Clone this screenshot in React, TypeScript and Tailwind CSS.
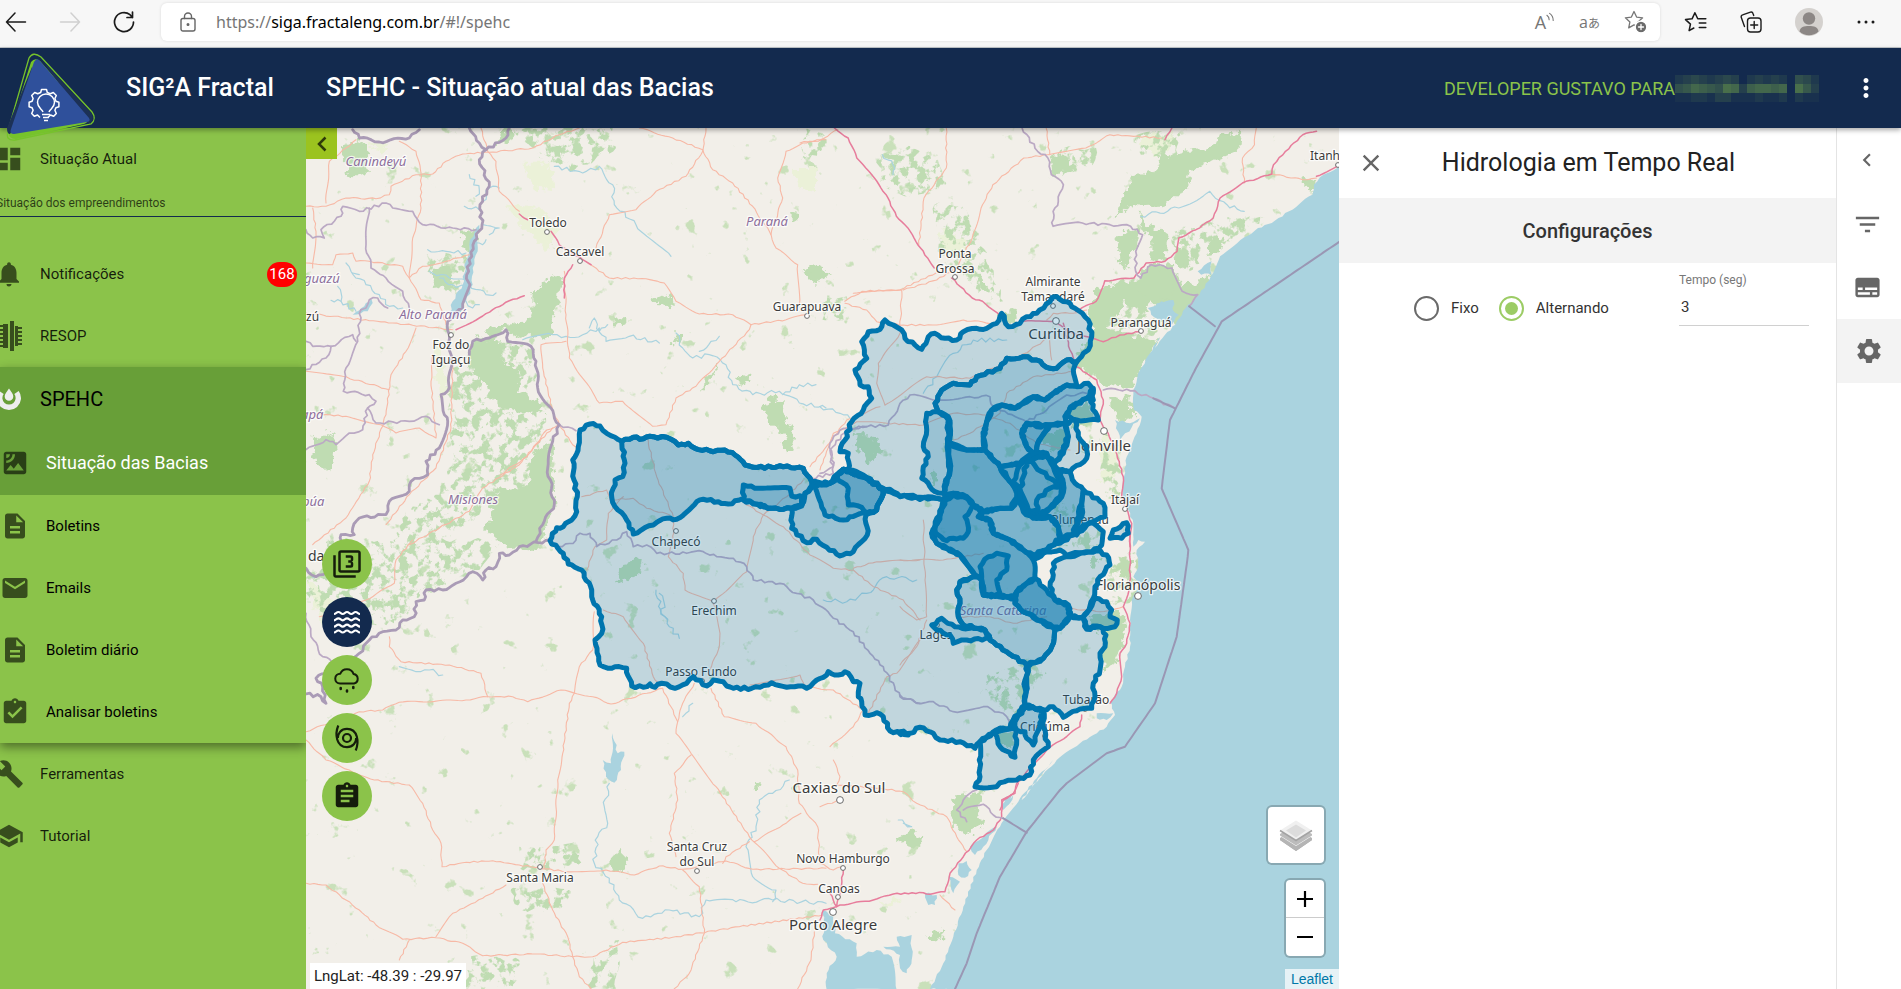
import type { ReactNode } from "react";
import {
  MdDashboard, MdNotifications, MdSatellite, MdDescription, MdEmail, MdAssignmentTurnedIn,
  MdBuild, MdSchool, MdFilter3, MdAssignment, MdFilterList, MdSubtitles, MdSettings,
  MdClose, MdMoreVert, MdChevronLeft,
} from "react-icons/md";

/* ---------- Map geometry ---------- */

type Sheet = "nw" | "sw" | "se" | "ne" | "east" | "coast" | "mid";
type Point = [number, number];
type Part = [Sheet, string];

/* Each survey sheet has an origin and a number of units per map pixel. */
const sheets: Record<Sheet, [number, number, number, number]> = {
  nw: [306, 128, 3, 3],
  sw: [306, 540, 3, 3],
  se: [820, 760, 3, 3],
  ne: [800, 128, 2.904, 3],
  east: [820, 270, 3, 3],
  coast: [900, 520, 3, 3],
  mid: [500, 400, 3, 3],
};

const project = (parts: Part[]): Point[] =>
  parts.flatMap(([sheet, text]) => {
    const [ox, oy, kx, ky] = sheets[sheet];
    return text.trim().split(/\s+/).map((pair): Point => {
      const [x, y] = pair.split(",").map(Number);
      return [ox + x / kx, oy + y / ky];
    });
  });

/* Breaks long edges up with small deterministic offsets, so lines look surveyed. */
const trace = (parts: Part[], closed: boolean, rough: number): string => {
  const pts = project(parts);
  const out: string[] = [];
  const count = closed ? pts.length : pts.length - 1;
  for (let i = 0; i < count; i++) {
    const [x0, y0] = pts[i];
    const [x1, y1] = pts[(i + 1) % pts.length];
    const len = Math.hypot(x1 - x0, y1 - y0) || 1;
    const steps = Math.max(1, Math.round(len / 4));
    for (let s = 0; s < steps; s++) {
      const t = s / steps;
      const x = x0 + (x1 - x0) * t;
      const y = y0 + (y1 - y0) * t;
      const n = s === 0 ? 0 : Math.sin(x * 12.9 + y * 7.23) * rough;
      out.push(`${(x - ((y1 - y0) / len) * n).toFixed(1)},${(y + ((x1 - x0) / len) * n).toFixed(1)}`);
    }
  }
  if (!closed) {
    const last = pts[pts.length - 1];
    out.push(`${last[0].toFixed(1)},${last[1].toFixed(1)}`);
  }
  return `M${out.join("L")}${closed ? "Z" : ""}`;
};

const sea: Part[] = [
  ["ne", "1568,115 1520,140 1492,170 1488,200 1420,250 1370,285 1330,300 1270,345 1220,385 1200,435 1160,500 1120,540 1090,590 1060,620 1030,660"],
  ["east", "1020,200 990,250 960,300 940,360 942,420 965,440 950,490 920,560 912,620 908,680 925,720 940,760"],
  ["coast", "700,80 715,60 735,65 710,90 715,140 700,170 720,190 695,240 690,300 690,380 675,440 665,500 630,545 645,585 620,620 540,670 470,720 420,775 340,870"],
  ["se", "700,0 650,55 600,115 540,200 500,270 470,330 430,440 400,530 370,610 330,687 1600,720 1600,-1900"],
];

const woods: Part[] = [
  ["nw", "110,55 150,38 185,55 185,135 120,145 125,100"],
  ["nw", "765,440 760,500 742,560 745,620 720,640 690,625 640,630 600,605 560,640 490,670 500,640 560,600 610,590 660,580 680,555 682,490 710,465"],
  ["nw", "500,640 585,640 585,700 640,730 640,790 690,820 722,862 670,860 610,850 570,830 545,770 500,740 480,690"],
  ["nw", "735,940 740,1080 745,1140 700,1250 600,1260 540,1200 560,1150 540,1100 610,1080 660,1080 670,1010 700,960"],
  ["nw", "25,930 85,915 90,960 70,1030 50,1020 25,990"],
  ["nw", "380,420 420,410 440,440 430,475 400,480 375,450"],
  ["nw", "470,310 515,305 500,365 465,365"],
  ["nw", "560,60 590,5 625,10 620,40"],
  ["nw", "1033,515 1070,500 1110,525 1100,540 1040,525"],
  ["nw", "1495,435 1530,405 1560,440 1530,468"],
  ["nw", "1455,250 1475,255 1478,280 1458,275"],
  ["nw", "1240,700 1215,760 1185,795 1185,770"],
  ["nw", "1290,760 1340,735 1340,755 1310,770"],
  ["nw", "1370,830 1400,800 1430,830 1460,900 1470,970 1440,980 1430,920 1390,880"],
  ["nw", "925,572 970,570 970,585 925,592"],
  ["nw", "1105,615 1125,612 1120,640 1105,650"],
  ["sw", "630,0 700,0 690,30 650,35"],
  ["sw", "915,960 945,930 965,970 950,1000 915,985"],
  ["sw", "1350,720 1360,750 1345,750"],
  ["sw", "930,120 960,65 1010,60 1005,90 970,120 935,130"],
  ["se", "395,110 440,110 490,90 470,150 490,200 440,225 400,190"],
  ["se", "230,240 270,215 305,235 290,255"],
  ["se", "340,510 375,520 350,550 325,535"],
  ["ne", "1285,15 1280,60 1190,110 1130,130 1130,180 1050,235 990,225 950,240 910,275 960,150 1040,120 1040,90 1110,70 1190,60 1230,20"],
  ["ne", "925,320 985,305 970,380 945,425 920,395"],
  ["ne", "990,250 1010,290 1075,320 1060,400 1020,390 1015,320 985,290"],
  ["ne", "870,480 970,455 1010,410 1080,410 1110,480 1190,440 1190,490 1130,560 1100,600 1060,560 1030,500 1000,560 940,510 920,560 890,600 1040,640 1010,700 990,720 800,720 850,600 830,550"],
  ["ne", "1190,340 1230,325 1220,370 1185,370"],
  ["ne", "1090,345 1140,380 1130,420 1090,400"],
  ["ne", "580,545 630,550 620,590 590,590"],
  ["ne", "10,435 45,405 90,445 45,465"],
  ["ne", "505,430 540,470 570,510 520,470"],
  ["ne", "725,90 770,80 780,120 740,145"],
  ["ne", "1460,155 1500,155 1495,185 1460,185"],
  ["east", "960,0 1050,0 1060,80 1000,100 950,60"],
  ["east", "820,190 870,215 960,205 1010,205 960,290 935,350 860,350 790,300 790,240"],
  ["east", "870,385 935,380 940,440 900,460 880,420"],
  ["east", "745,410 800,400 830,450 770,480 745,440"],
  ["east", "660,500 740,470 740,530 700,550"],
  ["east", "110,490 160,490 190,550 150,580 110,540"],
  ["east", "320,610 350,600 345,650"],
  ["coast", "570,115 595,115 590,150 570,140"],
  ["coast", "670,110 690,130 690,180 665,170"],
  ["coast", "560,290 640,270 680,290 670,360 640,430 610,470 610,400 620,340 580,330"],
  ["coast", "290,640 340,635 340,680 300,680"],
];

/* Broken-up woodland, drawn as scattered patches. */
const thickets: Part[] = [
  ["nw", "440,720 500,700 590,800 640,860 720,870 700,960 660,1090 560,1100 520,1160 400,1240 260,1260 300,1150 400,1100 440,1000 430,860"],
  ["nw", "580,640 690,650 690,790 640,780 590,700"],
  ["nw", "360,380 480,380 470,500 380,480"],
  ["nw", "620,0 920,0 930,60 800,130 700,90"],
  ["nw", "1500,0 1560,0 1560,60 1480,110"],
  ["sw", "60,0 600,0 520,90 430,130 340,170 300,240 180,260 60,230 0,160 0,100 60,90"],
  ["sw", "640,920 820,910 820,990 640,985"],
  ["sw", "610,1050 800,1040 760,1110 640,1110"],
  ["sw", "490,1250 640,1260 620,1346 480,1346"],
  ["sw", "860,1250 940,1200 930,1346 850,1346"],
  ["ne", "220,70 320,50 400,90 430,160 370,200 320,210 240,170"],
  ["ne", "60,505 135,505 130,575 65,575"],
  ["ne", "390,230 470,230 520,330 590,520 520,500 400,370"],
  ["ne", "760,60 860,60 850,110 740,150"],
  ["ne", "960,20 1100,10 1090,100 990,80"],
  ["ne", "1080,310 1300,260 1350,270 1200,370 1130,430 1090,400"],
  ["east", "850,40 1000,20 1060,110 1000,200 830,210 820,110"],
  ["east", "840,470 900,520 900,700 850,680"],
  ["east", "690,690 760,700 760,790 700,790"],
  ["coast", "480,40 600,20 600,80 470,85"],
  ["coast", "630,120 720,90 710,240 620,260"],
  ["coast", "270,460 400,430 440,460 380,520 370,580 340,610 310,570 240,520"],
  ["coast", "700,160 780,170 730,300 700,290"],
];

const scrub: Part[] = [
  ["nw", "650,110 730,110 745,190 680,180"],
  ["nw", "600,230 700,240 760,300 720,370 690,330 640,290"],
  ["nw", "1460,120 1530,120 1530,190 1480,180"],
  ["nw", "180,45 250,45 230,75"],
  ["nw", "380,640 400,640 430,800 400,820 390,740"],
  ["sw", "0,120 60,160 130,230 80,290 30,210"],
  ["ne", "410,310 480,330 480,400 420,370"],
  ["ne", "980,20 1090,20 1060,90 1000,60"],
  ["se", "180,430 250,415 210,440"],
  ["east", "850,480 900,540 880,620 840,640"],
];

const lakes: Part[] = [
  ["nw", "425,580 440,520 470,470 480,400 490,350 510,300 520,290 515,370 500,420 500,470 480,520 450,570"],
  ["nw", "150,552 175,535 195,510 200,525 185,550 140,560"],
  ["sw", "920,580 935,640 955,635 945,690 925,728 900,710 890,660 915,670"],
  ["sw", "0,80 20,110 50,108 20,115"],
  ["se", "10,450 40,470 45,520 110,550 110,590 170,570 215,590 230,690 20,690 20,640 50,590 10,540"],
  ["se", "190,560 240,560 230,530 275,525 275,600 260,640 240,625 240,585"],
  ["se", "450,260 510,210 530,200 490,260 465,285"],
  ["se", "415,310 440,303 455,330 435,353 415,345"],
  ["se", "315,400 350,405 345,435 325,435"],
  ["se", "385,350 420,365 400,400"],
  ["se", "545,135 580,105 570,130 550,150"],
  ["ne", "1155,430 1195,400 1195,440 1165,440"],
  ["ne", "1010,540 1050,520 1100,560 1080,590 1020,560"],
  ["east", "1010,100 1060,90 1060,150 1010,140"],
  ["east", "885,450 930,460 960,445 900,510"],
  ["coast", "590,580 640,580 620,600 590,595"],
  ["coast", "310,840 340,820 325,855"],
];

const streams: Part[] = [
  ["nw", "120,405 135,430 180,470 220,500 250,535 290,540"],
  ["nw", "95,475 105,520 150,550"],
  ["nw", "75,517 105,520"],
  ["nw", "140,435 160,440"],
  ["nw", "365,365 420,370 480,375"],
  ["nw", "475,235 520,245 550,180 580,180"],
  ["nw", "490,140 520,185 510,205"],
  ["nw", "530,290 580,300 550,320"],
  ["nw", "500,350 530,350 540,335"],
  ["nw", "490,470 540,500 570,495"],
  ["nw", "480,520 500,540 520,530"],
  ["nw", "370,430 430,450 480,455"],
  ["nw", "400,450 440,470 480,480"],
  ["nw", "650,635 740,620 780,625 830,620 880,600 900,640 970,625 1060,645"],
  ["nw", "850,600 865,570 880,610 905,590"],
  ["nw", "1110,615 1130,660 1160,690 1210,680 1260,710 1280,770 1340,800 1420,790 1480,825 1560,840"],
  ["nw", "1180,670 1215,640 1240,625"],
  ["nw", "1430,800 1480,770 1530,770"],
  ["nw", "745,115 830,135 880,115 920,170 925,230 990,290 1095,385"],
  ["sw", "280,380 330,395 370,390 410,405"],
  ["sw", "1050,150 1065,210 1090,260 1120,295"],
  ["sw", "1060,160 1075,190 1065,220 1085,240"],
  ["sw", "910,730 895,800 905,850 875,890 865,970 910,1015 940,1080 1010,1135 1090,1110 1180,1130 1200,1080 1290,1085 1400,1080 1560,1090"],
  ["sw", "1450,720 1400,760 1360,780 1350,860 1320,920 1340,1010 1410,1050 1400,1085"],
  ["sw", "1160,490 1130,530"],
  ["ne", "990,265 1100,240 1190,190 1240,230 1290,250"],
  ["ne", "240,80 270,110 270,140"],
  ["east", "0,410 60,430 100,450"],
  ["east", "310,370 350,320 400,250 460,210 560,210"],
  ["se", "235,180 275,200 250,190"],
  ["mid", "970,600 1040,605 1100,580 1160,530 1250,540"],
];

const roads: Part[] = [
  ["nw", "0,235 60,235 120,210 210,212 250,200 255,175 330,140 380,138 420,100 470,78 560,72 680,60 760,20 820,0"],
  ["nw", "60,225 70,100 120,60 150,35"],
  ["nw", "280,40 330,70 345,135 345,240 320,330 310,450 345,515 400,525 420,590"],
  ["nw", "0,405 80,410 90,380 140,375 150,400 190,400 290,415 310,450 350,415 420,400 490,380"],
  ["nw", "0,555 120,570 260,585 440,605"],
  ["nw", "525,0 545,70 570,100 580,190 640,250"],
  ["nw", "840,400 910,450 1020,452 1075,465 1110,520 1180,558 1280,560 1335,590 1440,575 1500,560"],
  ["nw", "870,360 910,260 990,245 1050,190 1140,145 1190,70 1200,0"],
  ["nw", "1000,0 1100,30 1190,65 1220,125 1280,165 1340,235 1390,310 1410,360 1475,410 1480,530"],
  ["nw", "1560,35 1490,45 1440,70 1415,150 1430,210 1395,320"],
  ["nw", "775,430 780,560 790,690 880,825 950,820 1040,895 1080,890 1110,810 1170,775 1240,700 1330,605 1335,590"],
  ["nw", "780,640 705,650 710,720 740,850 760,890 800,950 815,960"],
  ["nw", "330,600 300,670 255,740 240,860 200,980 190,1060 120,1170 20,1250"],
  ["nw", "380,680 375,760 390,930 340,900 270,915 225,890 120,865 0,855"],
  ["nw", "440,700 435,900 390,1020 310,1100 240,1190"],
  ["nw", "740,900 690,950 640,1010 530,1080 490,1150 400,1200 310,1250"],
  ["nw", "20,240 30,310 20,420"],
  ["nw", "0,730 110,745 250,785"],
  ["sw", "320,0 270,60 265,130 180,180 40,230"],
  ["sw", "250,290 250,320 285,365 430,375 525,400 545,470"],
  ["sw", "0,575 160,515 230,510 280,487 480,480 545,470 620,470 665,485 765,450 860,470 915,492 1070,445"],
  ["sw", "865,215 860,330 820,380 805,460 790,490 770,640 755,720 745,900 720,930 715,985"],
  ["sw", "0,600 60,660 130,690 205,720 310,735 350,790 380,870 405,910 408,980 470,968 560,962 640,975 780,995 900,990 985,1005 1060,978 1130,988 1200,975 1260,963 1340,988 1560,985"],
  ["sw", "600,1035 530,1075 440,1120 390,1190"],
  ["sw", "0,1030 60,1035 160,1110 210,1155 290,1198 390,1193 470,1210 530,1247 690,1242 800,1250 860,1250 950,1207 1100,1192 1300,1160 1550,1125"],
  ["sw", "310,1200 280,1260"],
  ["sw", "710,1030 740,1110 785,1190 800,1250 820,1310 855,1346"],
  ["sw", "1070,445 1115,545 1110,580 1155,640 1230,740 1330,890 1420,985 1490,1030 1535,1033"],
  ["sw", "1165,430 1130,490 1115,545"],
  ["sw", "1155,645 1105,700 1115,780 1090,880 1110,950"],
  ["sw", "1215,445 1255,530 1350,550 1440,620 1475,690 1480,790 1535,860 1540,950"],
  ["sw", "1330,905 1260,950 1250,970"],
  ["sw", "1345,905 1430,855 1485,820"],
  ["sw", "1130,990 1180,1040 1195,1180 1150,1300 1105,1346"],
  ["sw", "1525,1175 1515,1260 1475,1346"],
  ["mid", "0,225 80,170 140,90 175,75"],
  ["mid", "440,110 470,230 520,350 520,420 505,470 550,520 555,570 640,605"],
  ["mid", "245,290 320,270 330,300 400,295 440,325 510,345"],
  ["mid", "370,290 325,340 320,420 285,440 260,510"],
  ["mid", "310,630 370,650 430,730 460,830 480,860"],
  ["mid", "640,610 660,700 655,750 630,810"],
  ["mid", "640,605 740,515 760,410 790,345 860,290 910,240"],
  ["mid", "720,300 790,345 850,380 930,465 1000,505 1060,510 1120,560 1210,600 1260,660"],
  ["mid", "1060,505 1130,485 1260,480"],
  ["mid", "1260,720 1190,820 1160,830 1105,940"],
  ["mid", "930,200 975,145 1040,60 1140,20"],
  ["mid", "750,855 830,840 900,825 915,860 1000,870 1090,930 1060,980 990,1040"],
  ["east", "0,600 40,490 110,455 200,460 310,465 400,430 500,435 570,460 650,520 750,540"],
  ["east", "195,405 170,340 175,280 240,190 245,60 100,70"],
  ["east", "75,100 140,120 170,155 250,165 350,165 430,150 520,160"],
  ["east", "250,60 350,30 400,0"],
  ["east", "195,405 320,320 450,325 540,285 600,260 690,200 695,270"],
  ["east", "400,510 450,490 540,430 560,370 640,320 760,305"],
  ["east", "680,150 700,130 760,130 800,120"],
  ["ne", "425,0 425,120 360,210 345,350"],
  ["ne", "460,410 500,330 530,230 560,170 650,90 720,80 830,60 900,20 1050,30"],
  ["ne", "715,0 725,80"],
  ["ne", "1325,0 1320,50 1285,90 1290,165"],
  ["ne", "1370,138 1460,155 1500,150"],
  ["ne", "130,520 180,490 290,485 395,435"],
  ["ne", "0,45 60,35 110,5"],
  ["coast", "70,0 75,180 80,290 50,300 0,260"],
  ["coast", "0,120 130,120 250,100"],
  ["coast", "180,290 270,290 340,310 440,290"],
  ["coast", "80,300 50,380 0,435"],
  ["coast", "510,265 600,275 670,260"],
  ["se", "60,120 0,140"],
  ["se", "40,0 60,50 50,75 180,85 250,95 290,130 380,170 410,230 440,275"],
  ["se", "0,310 40,330 65,320"],
  ["se", "360,405 405,450"],
];

const highways: Part[] = [
  ["nw", "450,605 520,570 560,545 610,518 655,503"],
  ["nw", "735,310 760,350 830,395 855,410"],
  ["nw", "800,410 775,450 775,510"],
  ["nw", "640,258 665,275"],
  ["ne", "100,0 140,30 165,90 200,130 250,200 280,265 320,310 350,360 390,420"],
  ["ne", "440,450 500,510 530,520 580,560 600,595"],
  ["ne", "800,550 860,520 885,458 970,450 1005,405 1060,400 1095,370 1100,330 1150,305 1200,270 1220,210 1285,165 1370,138 1375,110 1410,70 1460,20 1500,10"],
  ["ne", "1568,110 1500,145"],
  ["ne", "1060,35 1080,0"],
  ["ne", "650,580 740,580"],
  ["east", "700,155 760,190 850,215 900,195 960,185"],
  ["east", "730,160 750,240 770,290 800,310 830,330 850,390 840,450 880,520 910,620 905,680 935,760 930,830"],
  ["coast", "690,40 690,200 670,260 690,310 680,370 660,400 665,470 650,520 630,550"],
  ["coast", "545,585 540,620 440,690 350,790 345,820 310,840 300,870"],
  ["se", "595,70 580,100 545,120 545,170 520,210 470,240 430,290 390,340 375,395 330,403 310,398 220,402 160,420 60,435 10,450 0,480"],
  ["se", "70,330 60,400 50,440 30,400"],
];

const frontiers: Part[] = [
  ["nw", "140,5 160,30 220,42 310,30 340,5"],
  ["nw", "490,0 520,45 540,65 600,30 610,0"],
  ["nw", "540,65 520,95 550,175 522,230 528,290 505,340 482,440 492,470 470,540 425,580 430,620"],
  ["nw", "430,620 435,700 430,780 405,800 415,860 425,880 400,960 360,1000 365,1040 315,1060 310,1090 250,1120 240,1160 160,1170 140,1200 145,1220 105,1220 100,1250"],
  ["nw", "490,680 500,640 550,630 600,605 605,640 675,655 690,700 695,780 725,830 760,890 740,940 725,1020 745,1130 710,1190 690,1240"],
  ["sw", "730,0 640,20 610,45 580,40 570,80 540,90 530,120 500,95 450,130 410,150 360,150 355,180 330,185 325,230 290,240 270,270 230,275 190,300 160,340 100,370 60,400 30,415 50,440 60,490 45,470 0,462"],
  ["sw", "0,85 30,110 60,100"],
];

const stateLines: Part[] = [
  ["nw", "0,305 20,330 55,330 45,305 105,265 110,235 160,250 240,225 260,240 320,250 350,290 440,300 510,305"],
  ["nw", "190,240 180,350 195,420 240,450 290,490 310,540"],
  ["nw", "165,545 180,540 190,515 215,510 245,540"],
  ["nw", "165,545 155,640 120,720 112,790 190,800 210,820 185,840 210,885 310,880 360,865 400,890"],
  ["nw", "0,640 20,655 75,655 140,620 150,640"],
  ["nw", "0,725 60,690 75,655"],
  ["nw", "0,965 60,935 90,950 130,915 170,905 185,840"],
  ["nw", "760,890 810,908"],
  ["sw", "0,220 15,290 50,350 90,370"],
  ["mid", "150,422 175,440 220,430 240,400 270,400 290,440 350,420 380,395 400,440 440,435 470,460 560,460 610,455 650,470 700,475 740,500 760,540 840,550 890,580 940,600 1000,655 1060,695 1110,760 1150,800 1200,890 1260,910"],
  ["coast", "0,525 50,550 100,545 160,575 250,560 310,580 330,615"],
  ["east", "0,610 40,590 30,520 60,480 140,470 205,465 240,400 270,375 340,390 450,380 510,380 520,410 620,455 680,420 740,375 800,370"],
  ["mid", "935,235 1000,220 990,150 1040,90 1100,80"],
  ["ne", "645,0 690,70 720,90 730,140 765,170 750,220 735,250 735,295 820,285 900,290 960,295 995,320 975,370 975,430 990,450 1020,410 1080,420 1110,490 1155,500 1130,535"],
  ["se", "470,90 430,120 410,150 440,185"],
  ["se", "430,150 490,133 520,165 550,175"],
  ["east", "850,360 920,358 1000,385 1065,415"],
];

const maritime: Part[][] = [
  [
    ["ne", "1568,340 1225,580 1150,720"],
    ["east", "1050,450 1025,655 1105,840"],
    ["coast", "862,120 830,350 765,550 675,680 620,700 500,790"],
    ["se", "720,90 620,215 540,350 470,520 440,610 405,687"],
  ],
  [["ne", "1205,595 1130,535"]],
  [["east", "1065,415 1000,385"]],
  [["se", "620,218 550,175"]],
];

type Basin = { level: number; parts: Part[] };

const basins: Basin[] = [
  { level: 1, parts: [
    ["mid", "240,90 270,72 300,78 320,100 345,112 365,124 400,112 430,116 460,110 500,112 535,135 565,130 585,145 640,155 675,150 705,165 735,195 760,202 850,200 910,205 935,245 990,250 1020,215 1030,208 1100,235 1150,268 1170,268 1200,290 1240,286"],
    ["east", "300,682 350,685 372,690 360,735 345,770 335,790"],
    ["coast", "110,70 180,105 225,165 180,185 170,210 180,250 175,290 190,315 255,330 270,360 320,395 380,435 380,480 375,555 340,600 330,625 300,625 240,665 225,685 180,665 120,660 100,640 60,622 30,640 0,635"],
    ["mid", "1225,1005 1170,993 1150,950 1130,938 1095,945 1085,905 1075,890 1080,850 1060,845 1045,820 1035,815 1015,825 985,815 970,832 950,840 920,865 895,858 860,862 815,848 780,862 755,865 700,865 680,858 670,845 640,840 620,858 580,830 560,850 525,865 500,852 485,850 465,862 450,852 430,862 395,858 380,805 345,800 325,805 300,795 285,720 305,700 305,650 275,590 275,570 245,510 205,492 190,460 150,422 170,383 190,380 215,360 230,335 232,290 222,240 218,180 235,140"],
  ] },
  { level: 1, parts: [["mid", "365,124 400,112 430,116 460,110 500,112 535,135 565,130 585,145 640,155 675,150 705,165 735,195 760,202 850,200 910,205 935,245 935,262 915,280 905,315 875,325 815,325 760,310 725,297 685,312 655,305 610,298 590,305 530,358 500,355 460,375 400,402 380,360 345,320 335,292 345,240 368,230 375,190"]] },
  { level: 1, parts: [["mid", "730,255 765,265 870,265 875,288 910,290 900,320 875,325 815,325 760,312 730,300"]] },
  { level: 1, parts: [["mid", "875,325 875,385 920,428 950,418 980,442 1020,468 1060,455 1102,405 1098,345 1130,330 1150,270 1100,235 1030,208 1000,245 940,255 915,280 905,318"]] },
  { level: 1, parts: [["mid", "945,262 975,345 1030,360 1070,345 1100,340 1130,330 1150,270 1100,235 1030,208 1000,245"]] },
  { level: 1, parts: [["mid", "1010,235 1045,265 1045,315 1085,322 1105,340 1130,330 1150,270 1100,235 1030,208"]] },
  { level: 1, parts: [["east", "195,150 180,178 145,185 125,215 140,265 105,300 120,345 145,350 155,385 130,420 95,455 75,510 60,545 85,550 85,600 130,615 190,655 220,670 275,685 350,685 375,690 380,640 390,600 383,520 385,450 355,425 345,400 365,360 400,340 450,345 470,320 540,295 560,265 610,260 650,270 690,295 710,295 740,270 770,275 790,250 805,240 815,200 805,150 765,115 740,95 700,80 690,95 650,130 620,140 600,160 565,170 545,130 530,160 500,175 470,175 430,185 410,210 375,205 345,190 325,200 305,238 285,225 255,205 245,180 220,165"]] },
  { level: 2, parts: [["east", "345,400 365,360 400,340 450,345 470,320 540,295 560,265 610,260 650,270 690,295 710,295 740,270 770,275 760,300 770,345 740,345 700,370 675,390 640,380 585,415 545,405 515,420 500,455 490,500 495,540 440,540 385,520 390,470 380,440 355,425"]] },
  { level: 1, parts: [["east", "320,430 350,425 385,440 390,480 383,520 390,600 375,640 370,670 345,665 325,640 305,625 310,590 325,560 310,530 320,480"]] },
  { level: 3, parts: [["east", "545,405 585,415 640,380 675,390 700,370 740,345 770,350 805,340 820,360 820,390 800,385 760,405 740,430 735,460 690,465 650,470 620,460 605,490 620,530 640,550 600,580 540,590 510,560 495,540 490,500 500,455 515,420"]] },
  { level: 2, parts: [["east", "820,355 812,395 835,450 770,450 735,440 750,415 800,385"]] },
  { level: 4, parts: [["east", "620,460 690,465 665,500 650,535 640,555 620,530 605,490"]] },
  { level: 3, parts: [["east", "690,465 735,460 745,500 730,530 720,560 700,590 680,550 650,545 650,530 665,500"]] },
  { level: 1, parts: [["east", "765,450 775,500 800,540 800,565 750,605 715,600 700,580 730,550 745,500 735,460"]] },
  { level: 4, parts: [["east", "385,520 440,540 495,540 540,590 590,670 575,715 540,715 490,725 460,705 440,680 400,670 375,680 380,640 390,600"]] },
  { level: 4, parts: [["east", "540,590 600,580 640,555 680,550 715,600 730,640 725,680 690,715 640,740 610,720 595,660 575,640"]] },
  { level: 0, parts: [["east", "600,585 625,570 665,605 722,650 690,655 650,690 655,725 625,720 600,660 580,635"]] },
  { level: 0, parts: [["east", "600,665 605,705 650,745 720,680 728,645 700,590 680,555 620,575"]] },
  { level: 3, parts: [["east", "715,600 750,605 765,640 790,660 785,700 770,750 765,790 720,805 715,770 690,740 650,740 690,715 725,680 730,640"]] },
  { level: 2, parts: [["east", "790,660 850,700 855,740 820,755 800,765 770,795 760,780 785,740 785,700"]] },
  { level: 4, parts: [
    ["east", "375,690 400,670 440,680 460,705 490,725 475,740 510,750 520,790 570,810 610,840"],
    ["coast", "400,120 405,175 380,190 350,215 345,235 250,225 245,180 225,165 180,105 110,70 95,40"],
  ] },
  { level: 1, parts: [["east", "460,705 435,740 445,785 430,805 400,805 380,812 355,795 345,780 375,690 400,675 440,685"]] },
  { level: 3, parts: [
    ["east", "490,725 540,715 575,715 590,690 610,725 640,745 690,740 715,770 720,805"],
    ["coast", "440,90 400,105 370,90 330,60 280,40 270,0"],
    ["east", "475,740"],
  ] },
  { level: 1, parts: [["coast", "245,170 240,140 265,110 290,100 325,108 320,150 290,180 300,220 250,225"]] },
  { level: 5, parts: [["coast", "405,175 440,210 465,240 505,255 510,290 480,325 440,310 380,280 345,250 350,215 380,190"]] },
  { level: 2, parts: [["coast", "225,170 180,185 170,210 180,250 175,290 190,315 255,330 270,360 320,395 380,435 430,415 455,380 465,330 380,280 345,250 345,230 250,225 245,180"]] },
  { level: 1, parts: [["coast", "95,315 125,295 165,320 255,330 270,355 200,360 160,370 150,345 110,330"]] },
  { level: 1, parts: [["coast", "480,70 520,45 550,15 580,10 610,35 605,75 575,95 540,98 500,106 480,90 430,100 402,118 415,95"]] },
  { level: 1, parts: [["coast", "460,130 500,110 590,92 620,105 630,135 600,170 585,200 580,235 560,280 545,292 510,290 505,255 465,240 450,200 460,165"]] },
  { level: 1, parts: [["coast", "630,55 640,30 680,8 685,40 665,55"]] },
  { level: 2, parts: [["coast", "585,235 620,245 635,270 630,290 652,300 645,320 610,325 590,318 560,328 550,295"]] },
  { level: 1, parts: [["coast", "510,290 550,292 560,325 600,320 618,345 615,380 600,400 600,450 580,490 585,530 575,565 530,572 490,592 460,560 430,570 375,555 375,480 385,440 430,415 455,380 465,330 480,325"]] },
  { level: 1, parts: [["coast", "240,665 300,625 340,625 340,600 375,558 430,570 430,620 445,680 400,720 390,765 350,780 300,788 290,800 225,800 240,770 238,720"]] },
  { level: 1, parts: [["coast", "285,640 345,625 350,660 345,712 300,680"]] },
  { level: 1, parts: [["coast", "345,605 375,560 425,570 425,600 410,640 400,675 380,655 375,635 350,630"]] },
];

type Label = { text: string; x: number; y: number; size: number; region?: boolean; dot?: Point; start?: boolean };

const labels: Label[] = [
  { text: "Canindeyú", x: 376, y: 166, size: 13, region: true },
  { text: "Paraná", x: 767, y: 226, size: 13, region: true },
  { text: "Alto Paraná", x: 433, y: 319, size: 13, region: true },
  { text: "guazú", x: 304, y: 283, size: 13, region: true, start: true },
  { text: "apá", x: 301, y: 419, size: 13, region: true, start: true },
  { text: "púa", x: 302, y: 506, size: 13, region: true, start: true },
  { text: "Misiones", x: 473, y: 504, size: 13, region: true },
  { text: "Santa Catarina", x: 1003, y: 615, size: 13, region: true },
  { text: "zú", x: 306, y: 321, size: 12, start: true },
  { text: "da", x: 308, y: 561, size: 14, start: true },
  { text: "Toledo", x: 548, y: 227, size: 12, dot: [547, 232] },
  { text: "Cascavel", x: 580, y: 256, size: 12, dot: [580, 261] },
  { text: "Foz do", x: 451, y: 349, size: 12, dot: [451, 335] },
  { text: "Iguaçu", x: 451, y: 364, size: 12 },
  { text: "Guarapuava", x: 807, y: 311, size: 12, dot: [807, 316] },
  { text: "Ponta", x: 955, y: 258, size: 12 },
  { text: "Grossa", x: 955, y: 273, size: 12, dot: [955, 277] },
  { text: "Almirante", x: 1053, y: 286, size: 12 },
  { text: "Tamandaré", x: 1053, y: 301, size: 12, dot: [1053, 306] },
  { text: "Curitiba", x: 1056, y: 339, size: 15, dot: [1056, 321] },
  { text: "Paranaguá", x: 1141, y: 327, size: 12, dot: [1141, 331] },
  { text: "Itanhaém", x: 1310, y: 160, size: 12, dot: [1338, 165], start: true },
  { text: "Joinville", x: 1104, y: 451, size: 15, dot: [1104, 431] },
  { text: "Itajaí", x: 1125, y: 504, size: 12, dot: [1125, 509] },
  { text: "Blumenau", x: 1080, y: 524, size: 12 },
  { text: "Florianópolis", x: 1138, y: 590, size: 14, dot: [1138, 596] },
  { text: "Lages", x: 936, y: 639, size: 12, dot: [937, 625] },
  { text: "Tubarão", x: 1086, y: 704, size: 12, dot: [1085, 709] },
  { text: "Criciúma", x: 1045, y: 731, size: 12, dot: [1045, 736] },
  { text: "Chapecó", x: 676, y: 546, size: 12, dot: [676, 531] },
  { text: "Erechim", x: 714, y: 615, size: 12, dot: [714, 601] },
  { text: "Passo Fundo", x: 701, y: 676, size: 12, dot: [702, 681] },
  { text: "Caxias do Sul", x: 839, y: 793, size: 15, dot: [840, 800] },
  { text: "Santa Cruz", x: 697, y: 851, size: 12 },
  { text: "do Sul", x: 697, y: 866, size: 12, dot: [697, 871] },
  { text: "Novo Hamburgo", x: 843, y: 863, size: 12, dot: [843, 868] },
  { text: "Santa Maria", x: 540, y: 882, size: 12, dot: [540, 867] },
  { text: "Canoas", x: 839, y: 893, size: 12, dot: [838, 897] },
  { text: "Porto Alegre", x: 833, y: 930, size: 15, dot: [833, 912] },
];

const fillFor = (level: number) => 1 - Math.pow(0.8, level);

function BasinMap() {
  return (
    <svg
      className="absolute inset-0 size-full"
      viewBox="306 128 1033 861"
      preserveAspectRatio="xMinYMin slice"
      role="img"
      aria-label="Mapa das bacias"
    >
      <defs>
        <filter id="ragged" x="-5%" y="-5%" width="110%" height="110%" colorInterpolationFilters="sRGB">
          <feTurbulence type="fractalNoise" baseFrequency="0.12" numOctaves="3" seed="4" />
          <feDisplacementMap in="SourceGraphic" scale="14" xChannelSelector="R" yChannelSelector="G" />
        </filter>
        <filter id="scatter" colorInterpolationFilters="sRGB">
          <feTurbulence type="fractalNoise" baseFrequency="0.11" numOctaves="4" seed="9" />
          <feColorMatrix values="0 0 0 0 0  0 0 0 0 0  0 0 0 0 0  9 0 0 0 -4.4" />
          <feComposite in="SourceGraphic" operator="in" />
        </filter>
        <filter id="sprinkle" colorInterpolationFilters="sRGB">
          <feTurbulence type="fractalNoise" baseFrequency="0.05" numOctaves="4" seed="21" />
          <feColorMatrix values="0 0 0 0 0  0 0 0 0 0  0 0 0 0 0  14 0 0 0 -10" />
          <feComposite in="SourceGraphic" operator="in" />
        </filter>
      </defs>
      <rect x="300" y="120" width="1600" height="1000" fill="#f2efe9" />
      <rect x="306" y="128" width="1033" height="861" fill="#c9e0ba" filter="url(#sprinkle)" />
      <g filter="url(#ragged)">
        {scrub.map((p, i) => <path key={i} d={trace([p], true, 0)} fill="#ebf1d8" />)}
      </g>
      <g filter="url(#scatter)">
        {thickets.map((p, i) => <path key={i} d={trace([p], true, 2)} fill="#bfdcb2" />)}
      </g>
      <g filter="url(#ragged)">
        {woods.map((p, i) => <path key={i} d={trace([p], true, 1)} fill="#bfdcb2" />)}
      </g>
      <g fill="#aad3df">
        <path d={trace(sea, true, 0.8)} />
        {lakes.map((p, i) => <path key={i} d={trace([p], true, 1.2)} />)}
      </g>
      <g fill="none" strokeLinejoin="round" strokeLinecap="round">
        {streams.map((p, i) => <path key={i} d={trace([p], false, 2)} stroke="#aad3df" strokeWidth="1.2" />)}
        {roads.map((p, i) => <path key={i} d={trace([p], false, 0.7)} stroke="#f7b9a6" strokeWidth="1.1" />)}
        {highways.map((p, i) => <path key={i} d={trace([p], false, 0.6)} stroke="#e77d9c" strokeWidth="1.5" />)}
        {stateLines.map((p, i) => <path key={i} d={trace([p], false, 1.4)} stroke="#bba9c4" strokeWidth="1.7" />)}
        {frontiers.map((p, i) => <path key={i} d={trace([p], false, 1.5)} stroke="#aa9bb6" strokeWidth="2.8" />)}
        {maritime.map((p, i) => <path key={i} d={trace(p, false, 0)} stroke="#9a97b4" strokeWidth="2" />)}
      </g>
      <g fontFamily="'Noto Sans', sans-serif" strokeLinejoin="round">
        {labels.map((l) => (
          <g key={l.text}>
            {l.dot && <circle cx={l.dot[0]} cy={l.dot[1]} r={l.size > 12 ? 3.4 : 2.4} fill="#fff" stroke="#6b6b6b" />}
            <text
              x={l.x}
              y={l.y}
              fontSize={l.size}
              fontStyle={l.region ? "italic" : "normal"}
              textAnchor={l.start ? "start" : "middle"}
              fill={l.region ? "#8d6f9c" : "#3b3b3b"}
              stroke="#ffffff"
              strokeOpacity="0.75"
              strokeWidth="2.5"
              paintOrder="stroke"
            >
              {l.text}
            </text>
          </g>
        ))}
      </g>
      <g stroke="#0075ae" strokeWidth="5" strokeLinejoin="round">
        {basins.map((b, i) => (
          <path key={i} d={trace(b.parts, true, 1.2)} fill="#0075ae" fillOpacity={fillFor(b.level)} />
        ))}
      </g>
    </svg>
  );
}

/* ---------- Icons ---------- */

const stroke = { fill: "none", stroke: "currentColor", strokeLinecap: "round", strokeLinejoin: "round" } as const;

const GateIcon = () => (
  <svg viewBox="0 0 30 30" className="size-[30px]" fill="currentColor">
    <path d="M0 4h9v2H0zM0 8h9v2H0zM0 12h9v2H0zM0 16h9v2H0zM0 20h9v2H0zM0 24h9v2H0zM9 3h5v24H9zM16 0h4v30h-4zM21 5h3v20h-3zM24 6h4v2h-4zM24 10h4v2h-4zM24 14h4v2h-4zM24 18h4v2h-4zM24 22h4v2h-4z" />
  </svg>
);

const BasinIcon = () => (
  <svg viewBox="0 0 30 30" className="size-[30px]">
    <path d="M7.5 8.5a9.3 9.3 0 1 0 15 0" fill="none" stroke="#eeeeee" strokeWidth="5.4" />
    <path d="M15 4.5c2.5 3.5 4.3 5.5 4.3 8a4.3 4.3 0 0 1-8.6 0c0-2.5 1.8-4.5 4.3-8z" fill="#eeeeee" />
  </svg>
);

const WavesIcon = () => (
  <svg viewBox="0 0 26 24" className="h-6 w-[26px]" {...stroke} strokeWidth="2.2" strokeLinecap="butt">
    {[3, 9.3, 15.6, 21.5].map((y) => (
      <path key={y} d={`M0 ${y + 1}c2.2 0 2.2-2 4.4-2s2.2 2 4.3 2 2.200-2 4.3-2 2.2 2 4.3 2 2.2-2 4.3-2 2.2 2 4.4 2`} />
    ))}
  </svg>
);

const RainIcon = () => (
  <svg viewBox="0 0 26 26" className="size-[26px]" {...stroke} strokeWidth="2">
    <path d="M6 16.5a4.9 4.900 0 0 1 .3-9.8 7 7 0 0 1 13.2.2A4.9 4.9 0 0 1 20 16.500z" />
    <path d="M6.700 21v1M13 23.500v1M19.300 20v1" strokeWidth="2.6" />
  </svg>
);

const CycloneIcon = () => (
  <svg viewBox="0 0 26 26" className="size-[26px]" {...stroke} strokeWidth="2.2" strokeLinecap="butt">
    <circle cx="13" cy="13" r="4" />
    <path d="M4.300 .5C.8 9 2 22.200 13 22.200c6 0 9.200-4.500 9.200-9.200M21.700 25.500c3.500-8.500 2.300-21.700-8.700-21.700-6 0-9.200 4.500-9.200 9.200" />
  </svg>
);

const starPath = "M10 1.500l2.600 5.600 6 .7-4.500 4.100 1.200 6-5.300-3-5.300 3 1.200-6L1.400 7.800l6-.7z";

function Logo() {
  return (
    <svg viewBox="0 0 104 98" className="pointer-events-none absolute left-0 top-0 z-20 h-[98px] w-[104px]" aria-hidden="true">
      <path d="M29 10Q33 3 41 9L92 64Q97 71 91 76L15 92Q5 93 8 83Z" fill="none" stroke="#76c32b" strokeWidth="1.3" />
      <path d="M31 14Q35 9 40 13L88 68Q90 74 84 76L16 91Q8 91 9 84Z" fill="#76c32b" />
      <path d="M32 19L7 80Q7 86 10 86L38 45Z" fill="#1c3157" />
      <path d="M42 12L92 66Q95 73 88 76L84 71Z" fill="#1c3157" />
      <path d="M34 14Q37 9 40 13L89 70Q91 73 87 74L14 86Q9 86 11 81Z" fill="#2f509b" />
      <g fill="none" stroke="#fff" strokeWidth="1.5" strokeLinejoin="round">
        <path d="M40 69.500l-2.500-2.500-3.200 1.300-2.600-2.800 1.400-3.200-1-2.600-3-1v-4.400l3-1 1-2.800-1.400-3 3-3 3 1.300 3-1.300.8-3h5l.8 3 3 1.300 3-1.300 3 3-1.400 3 1 2.800 3 1v4.400l-3 1-1 2.600 1.400 3.200-2.600 2.800-3.200-1.300-2.500 2.500" />
        <path d="M43 64c-1-3-5.500-4.500-5.500-9.500a8.500 8.500 0 0 1 17 0c0 5-4.500 6.500-5.500 9.500M42 66.500h8M43 69.500h6M44 72.500h4" />
      </g>
    </svg>
  );
}

/* ---------- Browser bar ---------- */

function BrowserBar() {
  return (
    <div className="flex h-12 shrink-0 items-center border-b border-[#c3c8cc] bg-[#f7f7f7] pb-1 text-[#1b1b1b]">
      <div className="flex w-[161px] shrink-0 items-center gap-8 pl-[5px]">
        <button aria-label="Voltar">
          <svg viewBox="0 0 22 20" className="h-5 w-[22px]" {...stroke} strokeWidth="1.5"><path d="M20.500 10H1.500M10 1L1.500 10l8.500 9" /></svg>
        </button>
        <button aria-label="Avançar" className="text-[#d0d0d0]">
          <svg viewBox="0 0 22 20" className="h-5 w-[22px]" {...stroke} strokeWidth="1.5"><path d="M1.500 10h19M12 1l8.500 9-8.500 9" /></svg>
        </button>
        <button aria-label="Atualizar">
          <svg viewBox="0 0 22 22" className="size-[22px]" {...stroke} strokeWidth="1.7"><path d="M20.500 11a9.500 9.500 0 1 1-3.500-7.300l2.500 2.800M19.500 1v5.500H14" /></svg>
        </button>
      </div>
      <div className="flex h-[38px] flex-1 items-center rounded-md bg-white pl-[19px] shadow-[0_0_3px_rgba(0,0,0,0.12)]">
        <svg viewBox="0 0 16 20" className="h-5 w-4 text-[#666]" {...stroke} strokeWidth="1.4">
          <rect x="1" y="6.500" width="14" height="12.500" rx="2" />
          <path d="M4.500 6.500V4.500a3.500 3.500 0 0 1 7 0v2" />
          <circle cx="8" cy="12.500" r="0.8" fill="currentColor" />
        </svg>
        <span className="ml-5 font-['Noto_Sans',sans-serif] text-base text-[#767676]">
          https://<span className="text-black">siga.fractaleng.com.br</span>/#!/spehc
        </span>
        <div className="ml-auto flex items-center gap-6 pr-3 text-[#767676]">
          <button aria-label="Ler em voz alta" className="flex items-start font-['Open_Sans',sans-serif] text-lg leading-5">
            A
            <svg viewBox="0 0 10 12" className="h-3 w-[9px]" {...stroke} strokeWidth="1.2"><path d="M1 3a6 6 0 0 1 2.500 5M4 .8a9.500 9.500 0 0 1 4 8" /></svg>
          </button>
          <button aria-label="Traduzir" className="font-['Open_Sans','Noto_Sans_CJK_JP',sans-serif] text-base leading-5">
            a<span className="text-xs">あ</span>
          </button>
          <button aria-label="Adicionar aos favoritos">
            <svg viewBox="0 0 24 24" className="size-6" {...stroke} strokeWidth="1.3">
              <path d={starPath} />
              <circle cx="17" cy="17" r="5.800" fill="#6b6b6b" stroke="#fff" />
              <path d="M17 14.500v5M14.500 17h5" stroke="#fff" />
            </svg>
          </button>
        </div>
      </div>
      <div className="flex w-[241px] shrink-0 items-center pl-6">
        <button aria-label="Favoritos" className="mr-8">
          <svg viewBox="0 0 22 20" className="h-[22px] w-6" {...stroke} strokeWidth="1.4"><path d="M13 7l-.4 0L10 1.500 7.400 7.100l-6 .7 4.500 4.100-1.200 6 4.300-2.400M13.500 7H20M14 11h6M14 15h6" /></svg>
        </button>
        <button aria-label="Coleções" className="mr-[33px]">
          <svg viewBox="0 0 22 22" className="size-[22px]" {...stroke} strokeWidth="1.4">
            <path d="M4.500 15.500L1.300 6.500a2 2 0 0 1 1.300-2.600L10.500 1.200a2 2 0 0 1 2.500 1.300l.7 2" />
            <rect x="7.500" y="7" width="13.500" height="14" rx="3" />
            <path d="M14.200 10.500v7M10.700 14h7" />
          </svg>
        </button>
        <button aria-label="Perfil" className="mr-[34px]">
          <svg viewBox="0 0 28 28" className="size-7">
            <circle cx="14" cy="14" r="14" fill="#d4d1ce" />
            <circle cx="14" cy="10.500" r="6.200" fill="#8c8785" />
            <path d="M4.500 23.500C5 19 9 18 14 18s9 1 9.500 5.500a14 14 0 0 1-19 0z" fill="#8c8785" />
          </svg>
        </button>
        <button aria-label="Mais opções">
          <svg viewBox="0 0 18 4" className="h-1 w-[18px]" fill="currentColor"><circle cx="2" cy="2" r="1.500" /><circle cx="9" cy="2" r="1.500" /><circle cx="16" cy="2" r="1.500" /></svg>
        </button>
      </div>
    </div>
  );
}

/* ---------- Header ---------- */

const mask = [
  [2, 3, 4, 3, 2, 3, 4, 3, 0, 2, 3, 2, 3, 2, 0, 5, 4, 2],
  [5, 6, 8, 7, 6, 5, 9, 8, 3, 7, 8, 8, 7, 8, 0, 9, 6, 3],
  [1, 1, 2, 2, 1, 3, 3, 1, 1, 1, 2, 1, 1, 2, 0, 2, 1, 1],
];

function Header() {
  return (
    <header className="relative z-10 flex h-20 shrink-0 items-center bg-[#132a4e] text-white shadow-[0_2px_5px_rgba(0,0,0,0.35)]">
      <Logo />
      <h1 className="ml-[126px] w-[200px] text-[25px] leading-8 font-medium">SIG²A Fractal</h1>
      <h2 className="text-[25px] leading-8 font-medium">SPEHC - Situação atual das Bacias</h2>
      <div className="ml-auto flex items-center pt-px">
        <span className="text-[18px] leading-6 text-[#8bc34a]">DEVELOPER GUSTAVO PARA</span>
        <div className="grid grid-cols-18 grid-rows-3" aria-hidden="true">
          {mask.flat().map((v, i) => (
            <span key={i} className="h-[9px] w-2 bg-[#8bc34a]" style={{ opacity: v * 0.05 }} />
          ))}
        </div>
      </div>
      <button aria-label="Menu" className="ml-8 mr-5 flex items-center"><MdMoreVert size={30} /></button>
    </header>
  );
}

/* ---------- Sidebar ---------- */

type ItemProps = { icon: ReactNode; children: ReactNode; nested?: boolean; className?: string; label?: string; badge?: string };

function Item({ icon, children, nested = false, className = "h-[62px]", label = "text-[15px]", badge }: ItemProps) {
  return (
    <a href="#!/spehc" className={`flex items-center gap-4 pr-[9px] ${className}`}>
      <span className={`shrink-0 text-black/60 ${nested ? "" : "-ml-[6px]"}`}>{icon}</span>
      <span className={label}>{children}</span>
      {badge && (
        <span className="ml-auto flex h-[25px] w-[30px] items-center justify-center rounded-full bg-[#ff0000] text-[15px] text-white">{badge}</span>
      )}
    </a>
  );
}

function Sidebar() {
  return (
    <nav className="w-[306px] shrink-0 overflow-hidden bg-[#8bc34a] text-black/85">
      <Item icon={<MdDashboard size={30} />}>Situação Atual</Item>
      <div className="mb-[26px] flex h-[27px] items-center border-b border-[#132a4e]">
        <span className="-ml-1 text-xs text-black/70">Situação dos empreendimentos</span>
      </div>
      <Item icon={<MdNotifications size={30} />} badge="168">Notificações</Item>
      <Item icon={<GateIcon />}>RESOP</Item>
      <div className="shadow-[0_4px_10px_rgba(0,0,0,0.45)]">
        <div className="bg-[#689f38] text-black">
          <Item icon={<BasinIcon />} label="text-xl" className="h-16">SPEHC</Item>
          <Item icon={<MdSatellite size={30} />} nested label="text-lg text-white" className="h-16">Situação das Bacias</Item>
        </div>
        <div className="text-black">
          <Item icon={<MdDescription size={30} />} nested>Boletins</Item>
          <Item icon={<MdEmail size={30} />} nested>Emails</Item>
          <Item icon={<MdDescription size={30} />} nested>Boletim diário</Item>
          <Item icon={<MdAssignmentTurnedIn size={30} />} nested>Analisar boletins</Item>
        </div>
      </div>
      <Item icon={<MdBuild size={30} />}>Ferramentas</Item>
      <Item icon={<MdSchool size={30} />}>Tutorial</Item>
    </nav>
  );
}

/* ---------- Map area ---------- */

const layerButtons = [
  { name: "Camadas", icon: <MdFilter3 size={30} />, active: false },
  { name: "Hidrologia", icon: <WavesIcon />, active: true },
  { name: "Chuva", icon: <RainIcon />, active: false },
  { name: "Ciclones", icon: <CycloneIcon />, active: false },
  { name: "Relatórios", icon: <MdAssignment size={30} />, active: false },
];

function MapArea() {
  return (
    <main className="relative min-w-0 flex-1 overflow-hidden bg-[#f2efe9]">
      <BasinMap />
      <button aria-label="Recolher menu" className="absolute left-0 top-0 flex size-[31px] items-center justify-center bg-[#9bc31f] text-black/70">
        <svg viewBox="0 0 10 16" className="h-4 w-[10px]" fill="none" stroke="currentColor" strokeWidth="2.5"><path d="M8.500 1.500L2 8l6.500 6.500" /></svg>
      </button>
      <div className="absolute left-4 top-[411px] flex flex-col gap-2">
        {layerButtons.map((b) => (
          <button
            key={b.name}
            aria-label={b.name}
            className={`flex size-[50px] items-center justify-center rounded-full ${b.active ? "bg-[#132a4e] text-white" : "bg-[#8bc34a] text-black/85"}`}
          >
            {b.icon}
          </button>
        ))}
      </div>
      <div className="absolute bottom-0 left-1 bg-white px-1 text-[15px] leading-[26px] text-[#222]">LngLat: -48.39 : -29.97</div>
      <div className="absolute bottom-[31px] right-[13px] flex flex-col items-end gap-[13px]">
        <button aria-label="Camadas do mapa" className="flex size-[60px] items-center justify-center rounded-md border-2 border-black/20 bg-white bg-clip-padding">
          <svg viewBox="0 0 34 34" className="size-[34px]">
            <path d="M17 10L33 22 17 33 1 22z" fill="#a9a9a9" />
            <path d="M1 20l16-10 16 10v2L17 33 1 22z" fill="#b5b5b5" />
            <path d="M1 16l16-9 16 9v2L17 28 1 18z" fill="#fff" />
            <path d="M1 16l16-9 16 9v1.500L17 27.500 1 17.500z" fill="#bcbcbc" />
            <path d="M1 12.500l16-10 16 10-16 10.500z" fill="#f0f0f0" />
            <path d="M7 12.500l10-6 10 6-10 7z" fill="#dcdcdc" />
            <path d="M1 12.500l16 10 16-10" fill="none" stroke="#a3a3a3" strokeWidth="1.5" />
          </svg>
        </button>
        <div className="flex w-[42px] flex-col overflow-hidden rounded-md border-2 border-black/20 bg-white bg-clip-padding text-black">
          <button aria-label="Aproximar" className="flex h-[38px] items-center justify-center border-b border-[#ccc]">
            <svg viewBox="0 0 16 16" className="size-4" stroke="currentColor" strokeWidth="2.2"><path d="M8 0v16M0 8h16" /></svg>
          </button>
          <button aria-label="Afastar" className="flex h-[38px] items-center justify-center">
            <svg viewBox="0 0 16 16" className="size-4" stroke="currentColor" strokeWidth="2.2"><path d="M0 8h16" /></svg>
          </button>
        </div>
      </div>
      <a href="#leaflet" className="absolute bottom-0 right-0 bg-white/70 px-[6px] font-['Liberation_Sans',sans-serif] text-[14px] leading-5 text-[#0078a8]">Leaflet</a>
    </main>
  );
}

/* ---------- Right panel ---------- */

function Radio({ id, label, defaultChecked = false }: { id: string; label: string; defaultChecked?: boolean }) {
  return (
    <div className="flex items-center gap-3">
      <input
        type="radio"
        id={id}
        name="modo"
        defaultChecked={defaultChecked}
        className="size-[25px] appearance-none rounded-full border-2 border-[#6a6a6a] bg-clip-content p-1 checked:border-[#9ccc65] checked:bg-[#9ccc65]"
      />
      <label htmlFor={id} className="text-[15px] text-[#333]">{label}</label>
    </div>
  );
}

function Panel() {
  return (
    <aside className="flex w-[497px] shrink-0 flex-col bg-white">
      <div className="flex h-[70px] items-center pl-[18px] text-[#222]">
        <button aria-label="Fechar" className="text-[#666]"><MdClose size={28} /></button>
        <h3 className="flex-1 pr-11 text-center text-[25px] leading-8">Hidrologia em Tempo Real</h3>
      </div>
      <h4 className="flex h-[65px] items-center justify-center bg-[#f3f3f3] text-xl font-medium text-[#333]">Configurações</h4>
      <form className="flex items-start pl-[75px] pr-[27px] pt-[9px]">
        <div className="flex gap-5 pt-6">
          <Radio id="fixo" label="Fixo" />
          <Radio id="alternando" label="Alternando" defaultChecked />
        </div>
        <div className="ml-auto flex w-[130px] flex-col">
          <label htmlFor="tempo" className="text-xs leading-4 text-[#777]">Tempo (seg)</label>
          <input id="tempo" defaultValue="3" className="h-[38px] w-full border-b border-[#d0d0d0] px-[2px] text-[15px] text-[#333] outline-none" />
        </div>
      </form>
    </aside>
  );
}

function Rail() {
  return (
    <div className="flex w-[65px] shrink-0 flex-col border-l border-[#e4e4e4] bg-white text-[#666]">
      <button aria-label="Expandir" className="flex h-16 items-center justify-center pr-1"><MdChevronLeft size={26} /></button>
      <button aria-label="Filtros" className="flex h-16 items-center justify-center pr-1"><MdFilterList size={31} /></button>
      <button aria-label="Legenda" className="flex h-[63px] items-center justify-center pr-1"><MdSubtitles size={29} /></button>
      <button aria-label="Configurações" className="flex h-16 items-center justify-center bg-[#f3f3f3]"><MdSettings size={30} /></button>
    </div>
  );
}

export default function App() {
  return (
    <div className="flex h-screen flex-col overflow-hidden font-[Roboto,sans-serif]">
      <BrowserBar />
      <Header />
      <div className="flex min-h-0 flex-1">
        <Sidebar />
        <MapArea />
        <Panel />
        <Rail />
      </div>
    </div>
  );
}
